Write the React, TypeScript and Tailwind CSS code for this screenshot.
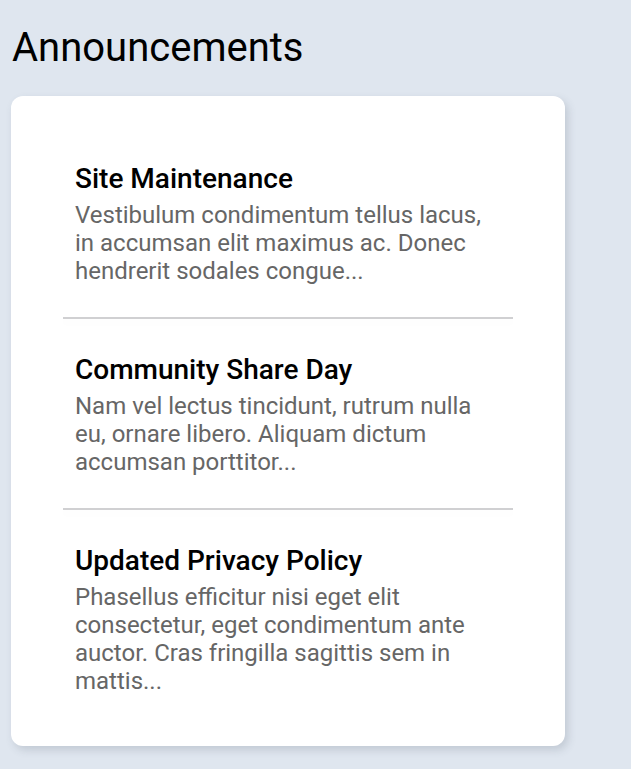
import React from 'react';

const announcements = [
  {
    title: 'Site Maintenance',
    body: 'Vestibulum condimentum tellus lacus, in accumsan elit maximus ac. Donec hendrerit sodales congue...',
  },
  {
    title: 'Community Share Day',
    body: 'Nam vel lectus tincidunt, rutrum nulla eu, ornare libero. Aliquam dictum accumsan porttitor...',
  },
  {
    title: 'Updated Privacy Policy',
    body: 'Phasellus efficitur nisi eget elit consectetur, eget condimentum ante auctor. Cras fringilla sagittis sem in mattis...',
  },
];

export default function App() {
  return (
    <div
      className="min-h-screen bg-[#dfe6ef] pt-6 pb-6"
      style={{ fontFamily: 'Roboto, "Noto Sans", sans-serif' }}
    >
      <h1 className="pl-3 text-[40px] leading-[48px] text-black">Announcements</h1>

      {/* Card */}
      <div className="ml-[11px] mt-6 w-[554px] rounded-xl bg-white pt-[32px] pb-[19px] px-[52px] shadow-[3px_4px_8px_rgba(60,70,90,0.18)]">
        {announcements.map((a, i) => (
          <div key={a.title}>
            {i > 0 && (
              <div className="h-[2px] bg-[#d0d0d2] shadow-[0_4px_6px_rgba(0,0,0,0.03)]" />
            )}
            <div className="px-3 pt-[35px] pb-[32px]">
              <h3 className="mb-1.5 text-[28px] font-medium leading-8 text-black">{a.title}</h3>
              <p className="text-[24px] leading-7 text-[#666666]">{a.body}</p>
            </div>
          </div>
        ))}
      </div>
    </div>
  );
}
